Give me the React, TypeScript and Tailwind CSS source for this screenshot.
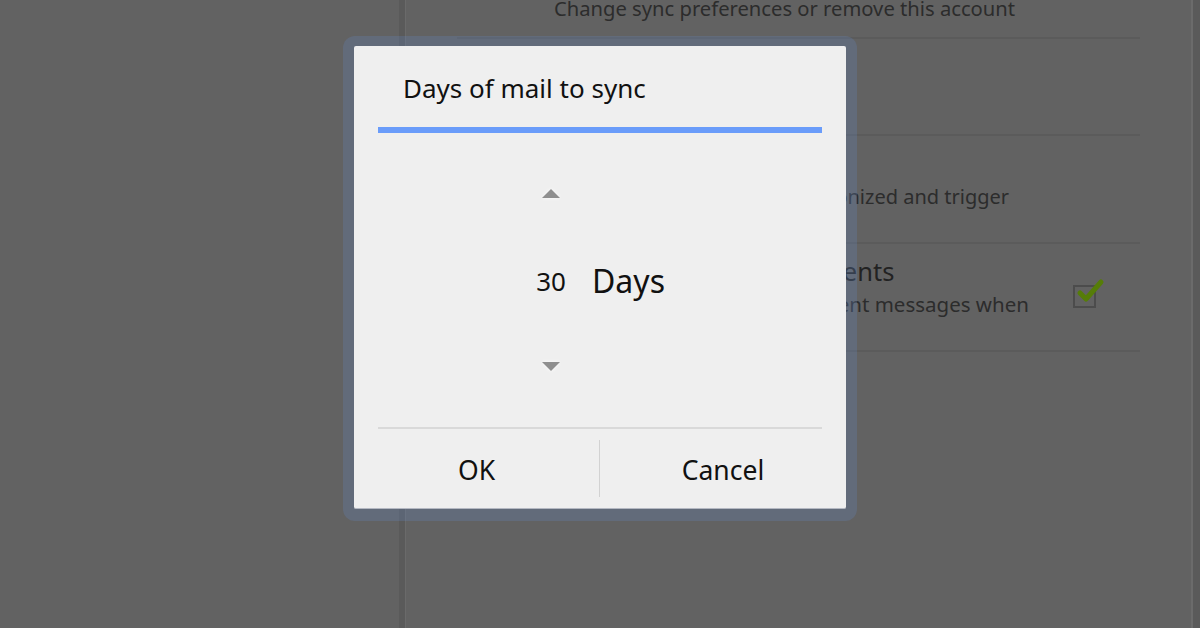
import React from 'react';

const font = { fontFamily: '"Noto Sans", "Open Sans", sans-serif' };

const Arrow = ({ down }: { down?: boolean }) => (
  <svg width="22" height="14" viewBox="0 0 22 14" className="drop-shadow-[0_0_2px_rgba(255,255,255,0.9)]">
    {down ? (
      <polygon points="2,3 20,3 11,12" fill="#8f8f8f" />
    ) : (
      <polygon points="2,11 20,11 11,2" fill="#8f8f8f" />
    )}
  </svg>
);

const CheckBox = () => (
  <div className="relative w-[23px] h-[23px] border-2 border-[#4c4c4c]">
    <svg width="30" height="28" viewBox="0 0 30 28" className="absolute -top-[10px] left-[1px]">
      <path d="M4 16 L10 22 L25 5" stroke="#567d08" strokeWidth="5" fill="none" strokeLinecap="round" strokeLinejoin="round" />
    </svg>
  </div>
);

export default function App() {
  return (
    <div className="relative w-[1200px] h-[628px] overflow-hidden bg-[#626262] flex" style={font}>
      {/* left pane */}
      <div className="w-[399px] h-full" />
      <div className="w-[6px] h-full bg-[#5a5a5a]" />
      <div className="w-[1px] h-full bg-[#6a6a6a]" />

      {/* right pane: settings list */}
      <div className="flex-1 h-full">
        <div className="ml-[51px] w-[683px]">
          <div className="h-[39px] border-b-2 border-[#5b5b5b] flex flex-col justify-end overflow-hidden">
            <div className="pl-[97px] mb-[19px] text-[20.2px] leading-[20px] text-[#2c2c2c] whitespace-nowrap">
              Change sync preferences or remove this account
            </div>
          </div>
          <div className="h-[97px] border-b-2 border-[#5b5b5b] pl-[97px] pt-[20px] text-[#222]">
            <div className="text-[24px] leading-[32px]">Days of mail to sync</div>
            <div className="text-[20px] leading-[26px] text-[#2c2c2c]">Last 30 days</div>
          </div>
          <div className="h-[108px] border-b-2 border-[#5b5b5b] pl-[97px] pt-[15px] text-[#222]">
            <div className="text-[24px] leading-[32px]">Email notifications</div>
            <div className="text-[20px] leading-[28px] text-[#2c2c2c] whitespace-nowrap">
              Notify me when mail is synchronized and trigger
            </div>
          </div>
          <div className="h-[108px] border-b-2 border-[#5b5b5b] pl-[97px] pt-[11px] flex items-start">
            <div className="flex-1 text-[#222]">
              <div className="text-[25.5px] leading-[32px] whitespace-nowrap">Auto-download attachments</div>
              <div className="mt-[3px] text-[20.5px] leading-[28px] text-[#2c2c2c] whitespace-nowrap">
                Download attachments to recent messages when
              </div>
              <div className="text-[20px] leading-[26px] text-[#2c2c2c]">connected to Wi-Fi</div>
            </div>
            <div className="mt-[30px] mr-[44px]">
              <CheckBox />
            </div>
          </div>
        </div>
      </div>
      <div className="w-[2px] h-full bg-[#6b6b6b]" />
      <div className="w-[7px] h-full bg-[#5a5a5a]" />

      {/* dialog */}
      <div className="absolute left-[343px] top-[36px] rounded-[12px] bg-[rgba(101,128,178,0.3)] pt-[10px] px-[11px] pb-[12px]">
        <div className="w-[492px] h-[463px] bg-[#efefef] rounded-[2px] border-b border-[#b4b8c2] flex flex-col">
          <div className="h-[81px] pl-[49px] pt-[29px] text-[26px] leading-none text-[#111]">
            Days of mail to sync
          </div>
          <div className="mx-[24px] h-[6px] bg-[#6a9cfa]" />
          <div className="h-[294px] flex pl-[167px]">
            <div className="w-[60px] flex flex-col items-center pt-[54px]">
              <Arrow />
              <div className="mt-[60px] h-[40px] text-[26px] leading-[40px] text-[#111]">30</div>
              <div className="mt-[58px]">
                <Arrow down />
              </div>
            </div>
            <div className="ml-[11px] mt-[132px] text-[32px] leading-none text-[#111]">Days</div>
          </div>
          <div className="mx-[24px] h-[2px] bg-[#d9d9d9]" />
          <div className="flex-1 flex">
            <div className="w-[245px] pt-[4px] flex items-center justify-center text-[26.5px] text-[#111]">OK</div>
            <div className="w-[1px] my-[11px] bg-[#d2d2d2]" />
            <div className="flex-1 pt-[4px] flex items-center justify-center text-[26.5px] text-[#111]">Cancel</div>
          </div>
        </div>
      </div>
    </div>
  );
}
